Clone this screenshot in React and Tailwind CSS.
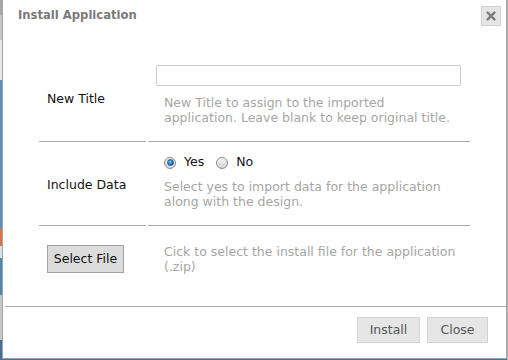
import React from "react";

function Radio({ checked }) {
  return (
    <span className="relative inline-flex w-[12px] h-[12px] rounded-full border border-[#8c8c8c] bg-[linear-gradient(#f4f4f4,#d6d6d6)] items-center justify-center">
      {checked && (
        <span className="w-[7px] h-[7px] rounded-full border border-[#1d4f86] bg-[radial-gradient(circle_at_40%_35%,#7fc0f2,#1f6fbf_70%)]" />
      )}
    </span>
  );
}

export default function App() {
  return (
    <div className="relative w-[508px] h-[360px] overflow-hidden bg-[#3d7a90] font-['DejaVu_Sans',sans-serif] text-[12.5px]">
      <div className="absolute left-0 top-0 w-[3px] h-[360px] flex flex-col">
        <div className="h-[15px] bg-[#a8a8a8]" />
        <div className="h-[25px] bg-[#c6c6c6]" />
        <div className="h-[40px] bg-[#e6e6e6]" />
        <div className="h-[148px] bg-[#5f8fb8]" />
        <div className="h-[18px] bg-[#d4784c]" />
        <div className="h-[12px] bg-[#d8e4ec]" />
        <div className="h-[37px] bg-[#4d89ad]" />
        <div className="h-[45px] bg-[#c8c8c8]" />
        <div className="flex-1 bg-[#456f94]" />
      </div>
      <div className="absolute right-0 top-0 w-[1px] h-[360px] bg-[#b0b0b0]" />

      <div className="absolute left-[2px] top-[-1px] w-[505px] h-[360px] border border-[#a3a3a3] bg-white flex flex-col">
        <div className="h-[31px] flex items-center justify-between pl-[15px] pr-[5px]">
          <span className="font-bold text-[11.6px] text-[#7a7a7a]">Install Application</span>
          <span className="w-[20px] h-[20px] mt-[1px] bg-[#e6e6e6] border border-[#d2d2d2] flex items-center justify-center">
            <svg width="10" height="10" viewBox="0 0 10 10">
              <path d="M1.8 1.8L8.2 8.2M8.2 1.8L1.8 8.2" stroke="#7d7d7d" strokeWidth="2.4" strokeLinecap="square" />
            </svg>
          </span>
        </div>

        <div className="h-[275px] pt-[22px] pl-[36px]">
          <div className="grid grid-cols-[107px_322px] gap-x-[2px]">
            <div className="border-b border-[#aaaaaa] flex items-center pl-[8px] pt-[4px] text-[#111]">New Title</div>
            <div className="border-b border-[#aaaaaa] pt-[12px] pb-[16px] pl-[8px]">
              <div className="w-[305px] h-[21px] border border-[#cccccc] rounded-[2px] bg-white" />
              <div className="mt-[9px] pl-[8px] leading-[15px] text-[#a6a6a6] whitespace-nowrap">
                New Title to assign to the imported<br />application. Leave blank to keep original title.
              </div>
            </div>

            <div className="border-b border-[#aaaaaa] flex items-center pl-[8px] pt-[3px] text-[#111]">Include Data</div>
            <div className="border-b border-[#aaaaaa] pt-[13px] pb-[16px] pl-[16px]">
              <div className="h-[15px] flex items-center text-[#111]">
                <Radio checked />
                <span className="ml-[8px]">Yes</span>
                <span className="ml-[12px] flex items-center"><Radio /></span>
                <span className="ml-[8px]">No</span>
              </div>
              <div className="mt-[9px] leading-[15px] text-[#a6a6a6] whitespace-nowrap">
                Select yes to import data for the application<br />along with the design.
              </div>
            </div>

            <div className="pl-[8px] pt-[19px]">
              <div className="w-[77px] h-[28px] bg-[#dcdcdc] border border-[#a0a0a0] flex items-center justify-center text-[#111]">Select File</div>
            </div>
            <div className="pt-[18px] pl-[16px] leading-[15px] text-[#a6a6a6] whitespace-nowrap">
              Cick to select the install file for the application<br />(.zip)
            </div>
          </div>
        </div>

        <div className="h-[52px] ml-[2px] border-t border-[#aaaaaa] flex justify-end items-start pt-[10px] pr-[18px] gap-[7px] text-[#555]">
          <div className="w-[63px] h-[26px] bg-[#e6e6e6] border border-[#d2d2d2] flex items-center justify-center">Install</div>
          <div className="w-[61px] h-[26px] bg-[#e6e6e6] border border-[#d2d2d2] flex items-center justify-center">Close</div>
        </div>
      </div>
    </div>
  );
}
